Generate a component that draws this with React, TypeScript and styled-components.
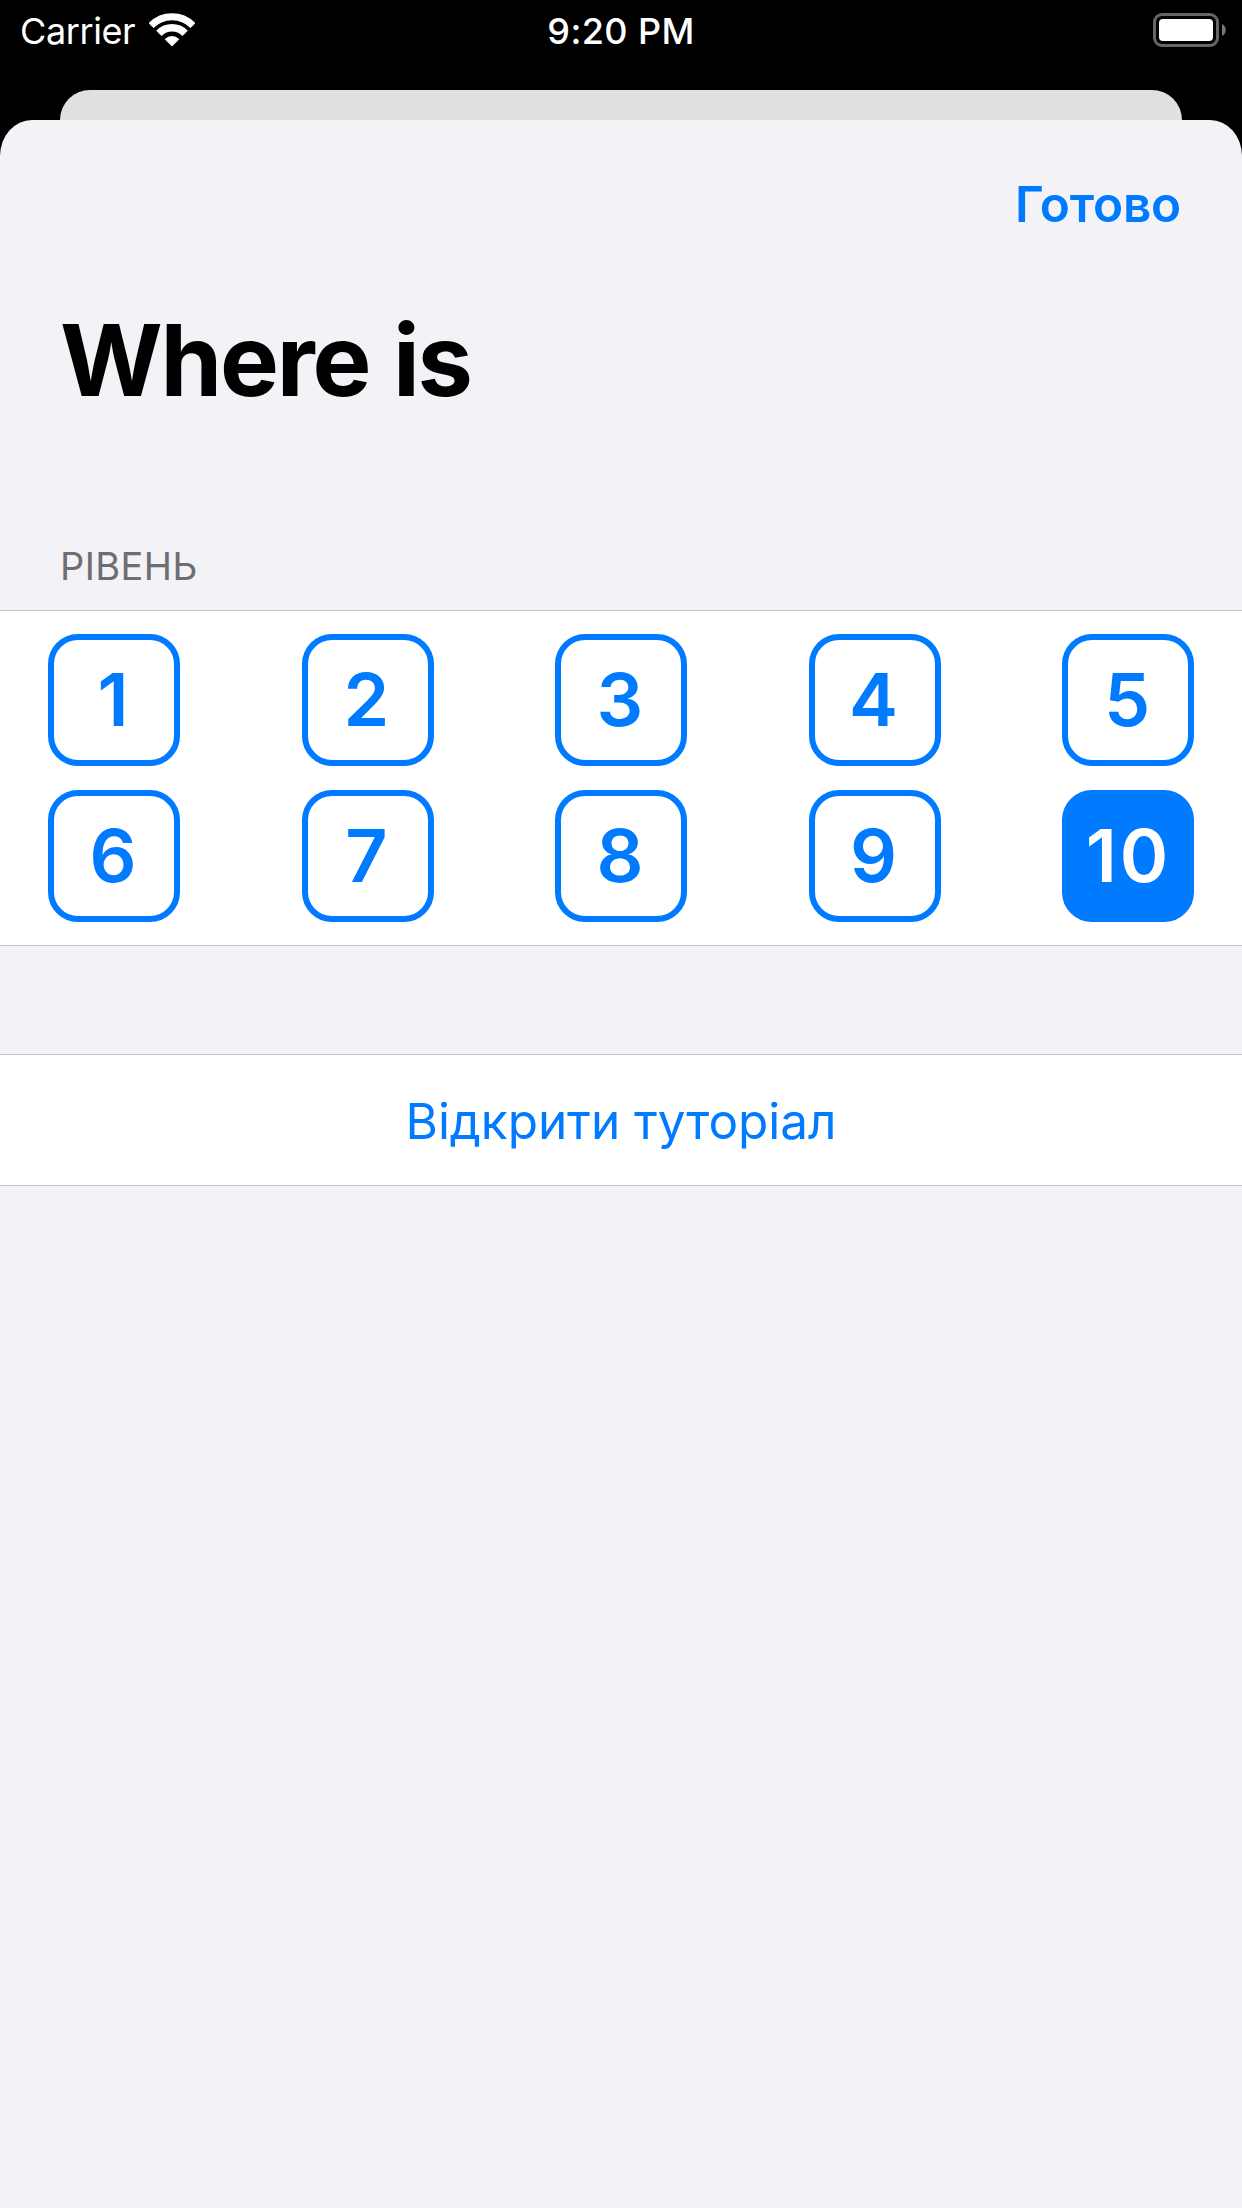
import React, { useState } from "react";
import styled, { createGlobalStyle } from "styled-components";

const GlobalStyle = createGlobalStyle`
  * { box-sizing: border-box; }
  body { margin: 0; background: #000; }
`;

const Screen = styled.div`
  display: flex;
  flex-direction: column;
  width: 1242px;
  height: 2208px;
  overflow: hidden;
  background: #000;
  font-family: Inter, "Liberation Sans", sans-serif;
`;

const StatusBar = styled.header`
  display: grid;
  grid-template-columns: 1fr auto 1fr;
  align-items: center;
  height: 60px;
  margin-bottom: 30px;
  padding: 0 16px;
  color: #fff;
  font-size: 36px;
`;

const CarrierGroup = styled.div`
  display: flex;
  align-items: center;
  gap: 14px;
  padding-left: 4px;
`;

const Carrier = styled.span`
  padding-top: 2px;
  letter-spacing: -0.4px;
  line-height: 58px;
`;

const Time = styled.span`
  padding-top: 2px;
  font-weight: 500;
  letter-spacing: 0.4px;
  line-height: 58px;
`;

const BatterySlot = styled.div`
  display: flex;
  justify-content: flex-end;
`;

const BackCard = styled.div`
  flex: none;
  height: 30px;
  margin: 0 60px;
  border-radius: 30px 30px 0 0;
  background: #e0e0e0;
`;

const Sheet = styled.main`
  display: flex;
  flex: 1;
  flex-direction: column;
  border-radius: 32px 32px 0 0 / 36px 36px 0 0;
  background: #f2f2f7;
`;

const NavBar = styled.nav`
  display: flex;
  align-items: center;
  justify-content: flex-end;
  height: 168px;
  padding: 0 61px;
`;

const DoneButton = styled.button`
  border: 0;
  padding: 0;
  background: none;
  color: #007aff;
  font: inherit;
  font-size: 49.5px;
  font-weight: 600;
  letter-spacing: -0.2px;
  line-height: 60px;
`;

const Title = styled.h1`
  height: 144px;
  margin: 0;
  padding-left: 60px;
  color: #000;
  font-size: 99px;
  font-weight: 700;
  letter-spacing: -2.2px;
  line-height: 144px;
  word-spacing: 2.5px;
`;

const SectionHeader = styled.h2`
  height: 178px;
  margin: 0;
  padding: 104px 0 0 60px;
  color: #6d6d72;
  font-size: 38px;
  font-weight: 400;
  letter-spacing: 0.4px;
  line-height: 60px;
`;

const Cell = styled.section`
  border: solid #c6c6c8;
  border-width: 1px 0;
  background: #fff;
`;

const LevelGrid = styled(Cell)`
  display: grid;
  grid-template-columns: repeat(5, 132px);
  justify-content: space-between;
  row-gap: 24px;
  height: 336px;
  margin-bottom: 108px;
  padding: 23px 48px;
`;

const LevelButton = styled.button<{ $selected: boolean }>`
  display: flex;
  align-items: center;
  justify-content: center;
  width: 132px;
  height: 132px;
  border: 6px solid #007aff;
  border-radius: 30px;
  padding: 0 0 1px 1px;
  background: ${({ $selected }) => ($selected ? "#007aff" : "#fff")};
  color: ${({ $selected }) => ($selected ? "#fff" : "#007aff")};
  font: inherit;
  font-size: 73.5px;
  font-weight: 600;
  letter-spacing: 3px;
  line-height: 119px;
`;

const TutorialCell = styled(Cell)`
  height: 132px;
`;

const TutorialButton = styled.button`
  width: 100%;
  height: 130px;
  border: 0;
  padding: 3px 0 0;
  background: none;
  color: #007aff;
  font: inherit;
  font-size: 49.5px;
  letter-spacing: -0.05px;
  line-height: 127px;
`;

const WifiIcon = () => (
  <svg width="46" height="36" viewBox="0 0 46 36" fill="none">
    <clipPath id="wifi-wedge">
      <path d="M23 34.5 L-11.5 0 V-10 H57.5 V0 Z" />
    </clipPath>
    <g clipPath="url(#wifi-wedge)" stroke="#fff">
      <circle cx="23" cy="34" r="29.2" strokeWidth="7" />
      <circle cx="23" cy="34" r="18.3" strokeWidth="7.4" />
      <circle cx="23" cy="34" r="5" strokeWidth="10" />
    </g>
  </svg>
);

const BatteryIcon = () => (
  <svg width="73" height="34" viewBox="0 0 73 34">
    <rect x="1.5" y="1.5" width="63" height="31" rx="7.5" fill="none" stroke="#666" strokeWidth="3" />
    <rect x="6" y="6" width="54" height="22" rx="4" fill="#fff" />
    <path d="M69 11 C74 13 74 21 69 23 Z" fill="#777" />
  </svg>
);

const levels = [1, 2, 3, 4, 5, 6, 7, 8, 9, 10];

export default function App() {
  const [level, setLevel] = useState(10);
  return (
    <>
      <GlobalStyle />
      <Screen>
        <StatusBar>
          <CarrierGroup>
            <Carrier>Carrier</Carrier>
            <WifiIcon />
          </CarrierGroup>
          <Time>9:20 PM</Time>
          <BatterySlot>
            <BatteryIcon />
          </BatterySlot>
        </StatusBar>
        <BackCard />
        <Sheet>
          <NavBar>
            <DoneButton>Готово</DoneButton>
          </NavBar>
          <Title>Where is</Title>
          <SectionHeader>РІВЕНЬ</SectionHeader>
          <LevelGrid>
            {levels.map((n) => (
              <LevelButton key={n} $selected={n === level} onClick={() => setLevel(n)}>
                {n}
              </LevelButton>
            ))}
          </LevelGrid>
          <TutorialCell>
            <TutorialButton>Відкрити туторіал</TutorialButton>
          </TutorialCell>
        </Sheet>
      </Screen>
    </>
  );
}
